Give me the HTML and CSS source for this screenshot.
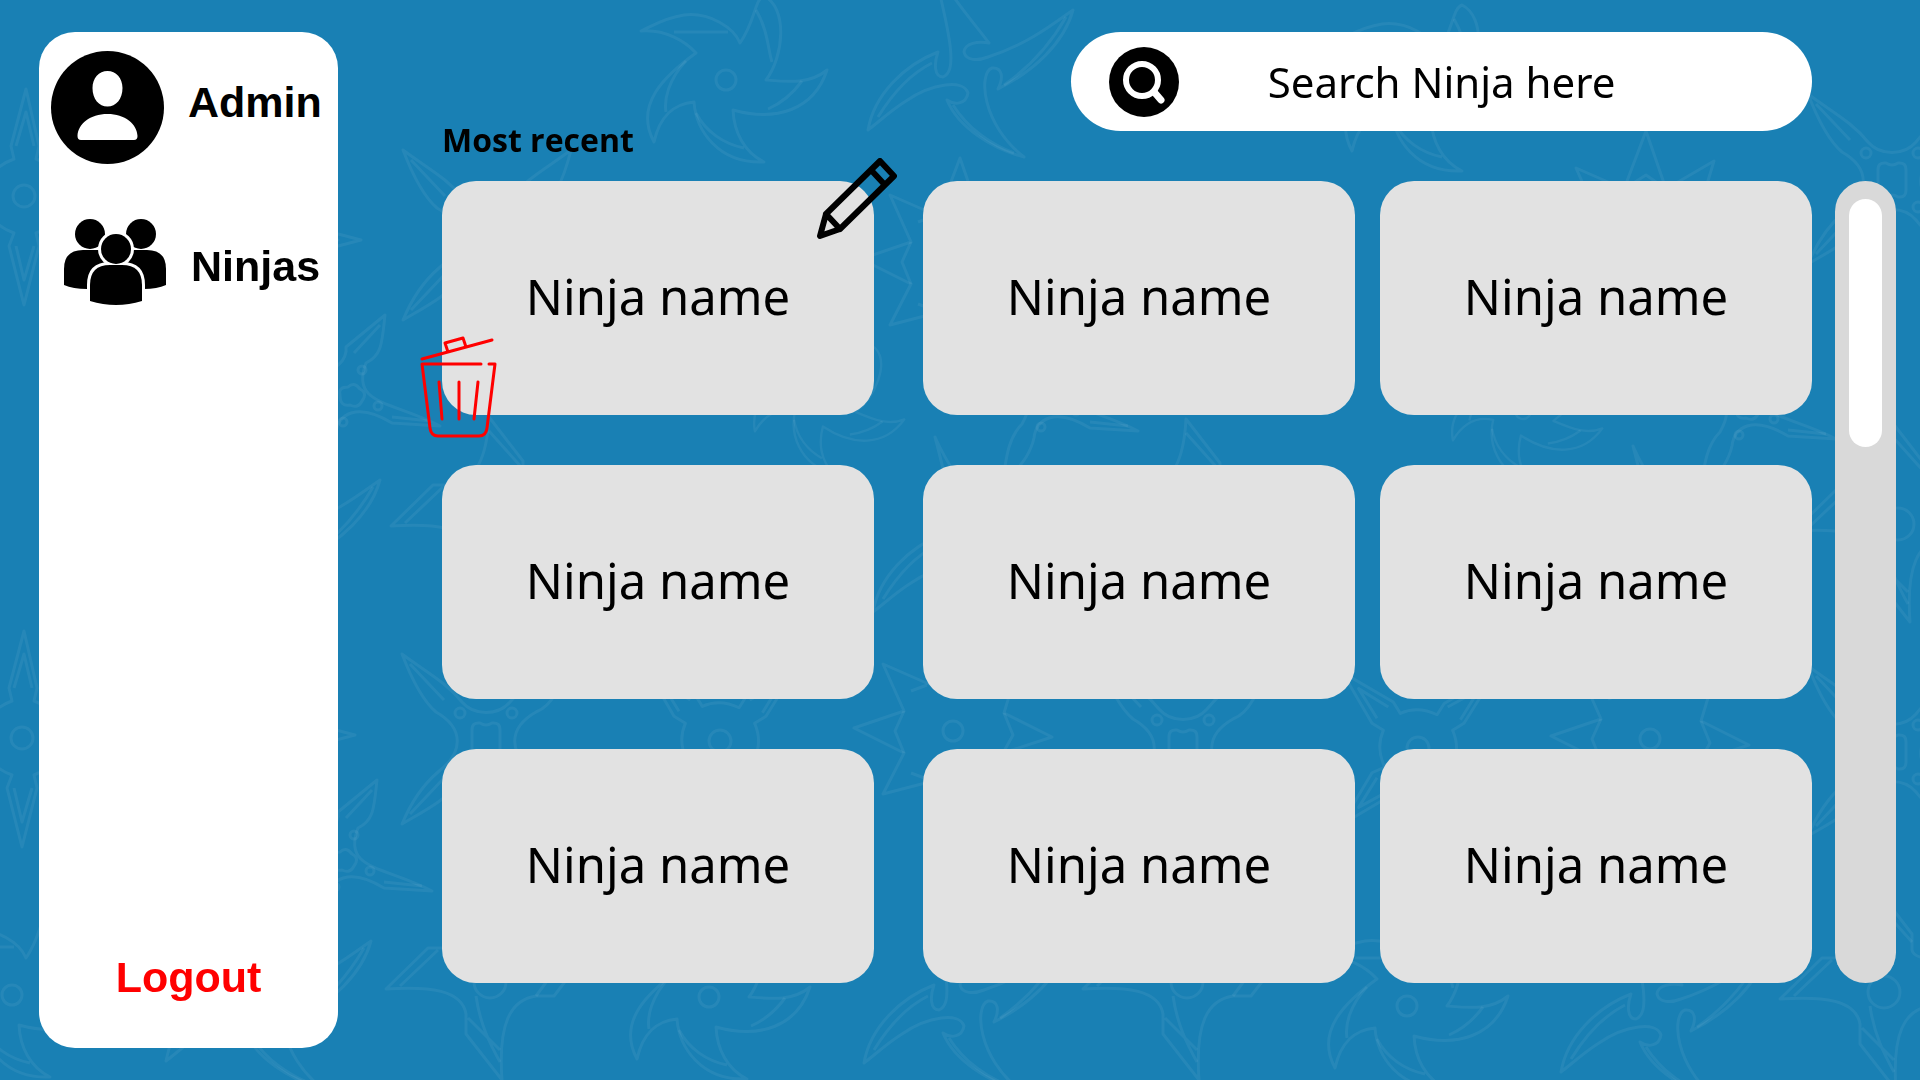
FILE: index.html
```html
<!DOCTYPE html>
<html lang="en">
<head>
<meta charset="utf-8">
<title>Ninjas</title>
<link rel="stylesheet" href="styles.css">
</head>
<body>
<svg class="backdrop" viewBox="0 0 1920 1080" preserveAspectRatio="xMidYMid slice" aria-hidden="true">
  <defs>
    <g id="pinwheel">
      <circle r="10"/>
      <path d="M14-37C8-52-16-68-42-65C-62-62-74-54-85-49C-60-51-40-38-30-27C-62-4-92 25-72 62C-66 35-52 24-32 22C-30 50-8 84 38 82C18 72 8 52 7 30C50 42 88 30 101-10C84 4 64 2 40 0C58-24 62-72 38-84C28-80 30-60 14-37Z"/>
      <path d="M-52-48H2M-40-19C-58 0-62 20-60 32M-30 33C-20 52-2 64 18 68M76 1C68 12 58 22 42 29M30-70C42-50 42-30 46-18"/>
    </g>
    <g id="swirl">
      <path d="M-100 55C-94 20-64-10-30-23C-34-12-34 2-25 2C-12-4-14-28-38-120C-20-80 0-60 21-32C10-34-3-32-4-23C-2-14 10-14 20-18C58-30 84-50 105-65C96-32 66-4 30 14C36 2 34-8 24-7C10-2 14 50 56 82C24 74-10 52-21 25C-14 30-2 30 0 18C-4 4-36 8-62 26C-78 36-88 46-100 55Z"/>
      <path d="M-90 42C-74 16-56-2-36-12M36 10C62-8 82-30 98-58M-15 30C0 54 24 70 46 78"/>
    </g>
    <g id="cross">
      <path d="M-84-86C-60-68-40-58-24-38C-12-24 12-24 24-38C40-58 60-68 84-86C76-54 66-34 50-28C22-12 22 12 48 32C60 44 74 60 84 84C60 70 40 60 24 40C12 26-12 26-24 40C-40 60-60 70-84 84C-74 60-62 44-48 32C-22 12-22-12-50-28C-64-40-74-60-84-86Z"/>
      <path d="M-14 10V-10Q-14-18-6-17Q0-13 6-17Q14-18 14-10V10Q14 18 6 17Q0 13-6 17Q-14 18-14 10ZM-76-76L-42-40M-76 74L-42 38"/>
      <circle cx="-26" cy="-27" r="5"/><circle cx="26" cy="-27" r="5"/><circle cx="-26" cy="27" r="5"/><circle cx="26" cy="27" r="5"/>
    </g>
    <g id="dart">
      <circle cy="-2" r="16"/>
      <path d="M-104 5L-62-36H-42C-20-40-8-64-6-104L28-60V-44C30-34 50-32 104-40L64 12H46C20 16 8 40 12 96L-24 50V30C-28 6-60 2-104 5Z"/>
      <path d="M-90 2L-52-34M-14 12C-10 40 0 60 10 78M-22 34L10 66M-6-90L28-52M46 12L74-26"/>
    </g>
    <g id="thorn">
      <circle r="10"/>
      <path d="M-99-3L-49-20L-70-67L-22-46L0-104L20-46L68-74L51-18L99 6L50 22L68 72L20 50L0 100L-20 50L-70 63L-49 22Z"/>
      <path d="M-49-20L-58 0L-49 22M-22-46L0-60L20-46M51-18L60 4L50 22M-42-40L-26-46M-42 42L-26 48"/>
    </g>
    <g id="kunai">
      <circle r="11"/>
      <path d="M-10-37L-13-50L2-107L15-50L12-37Q30-30 37-12L50-15L107 0L50 15L37 12Q30 30 12 37L15 50L0 109L-15 50L-10 37Q-30 30-37 12L-50 15L-107 0L-50-15L-37-12Q-30-30-10-37Z"/>
      <path d="M-8-50L2-84L10-50M-8 50L0 84L10 50M50-8L84 0L50 8M-50-8L-84 0L-50 8"/>
    </g>
    <g id="shuriken">
      <path d="M33-82C30-54 30-42 14-34C-2 8 40 4 88 29L40 26C4 4-14 18-16 36C-22 62-40 70-48 88C-44 50-40 34-28 22C-10-10-30-16-80-36L-34-30C-18-22-4-38-6-50Z"/>
      <path d="M-12-2Q-14-10-4-10Q2-16 8-8Q16-4 10 4Q6 12-2 8Q-12 10-12-2ZM28-72L2-44M78 24L40 20"/>
      <circle cx="10" cy="-27" r="4"/><circle cx="26" cy="9" r="4"/><circle cx="-9" cy="25" r="4"/><circle cx="-26" cy="-12" r="4"/>
    </g>
  </defs>
  <g class="backdrop-lines">
    <use href="#pinwheel" x="726" y="80"/>
    <use href="#pinwheel" x="1424" y="89"/>
    <use href="#pinwheel" x="12" y="995"/>
    <use href="#pinwheel" x="709" y="997"/>
    <use href="#pinwheel" x="1407" y="1006"/>
    <use href="#pinwheel" transform="translate(825 402) rotate(18) scale(.8)"/>
    <use href="#pinwheel" transform="translate(1523 411) rotate(18) scale(.8)"/>
    <use href="#swirl" x="968" y="75"/>
    <use href="#swirl" x="266" y="1006"/>
    <use href="#swirl" x="964" y="1008"/>
    <use href="#swirl" x="1661" y="1017"/>
    <use href="#swirl" x="275" y="545"/>
    <use href="#swirl" x="973" y="557"/>
    <use href="#swirl" x="1671" y="566"/>
    <use href="#cross" x="487" y="236"/>
    <use href="#cross" x="486" y="740"/>
    <use href="#cross" x="1183" y="747"/>
    <use href="#cross" x="1892" y="180"/>
    <use href="#cross" x="1892" y="752"/>
    <use href="#dart" x="490" y="984"/>
    <use href="#dart" x="1187" y="984"/>
    <use href="#dart" x="1884" y="994"/>
    <use href="#dart" x="495" y="521"/>
    <use href="#dart" x="1192" y="523"/>
    <use href="#dart" x="1898" y="526"/>
    <use href="#thorn" x="960" y="262"/>
    <use href="#thorn" x="1646" y="235"/>
    <use href="#thorn" x="953" y="731"/>
    <use href="#thorn" x="1650" y="739"/>
    <use href="#kunai" x="24" y="196"/>
    <use href="#kunai" x="22" y="738"/>
    <use href="#kunai" x="254" y="240"/>
    <use href="#kunai" x="248" y="735"/>
    <use href="#kunai" transform="translate(720 741) rotate(45)"/>
    <use href="#kunai" transform="translate(1418 748) rotate(45)"/>
    <use href="#shuriken" x="352" y="397"/>
    <use href="#shuriken" x="344" y="862"/>
    <use href="#shuriken" x="1050" y="402"/>
    <use href="#shuriken" x="1748" y="410"/>
  </g>
</svg>

<div class="app">
  <aside class="sidebar">
    <nav class="nav">
      <a class="nav-link" href="#admin">
        <svg class="icon-avatar" viewBox="0 0 113 113" aria-hidden="true">
          <circle cx="56.500" cy="56.500" r="56.500"/>
          <path fill="#fff" d="M56.500 20C65 20 71.500 27 71.500 37C71.500 48 65 55.500 56.500 55.500S41.500 48 41.500 37C41.500 27 48 20 56.500 20ZM56.500 63C74 63 86 73 86.500 85Q86.500 89 83 89H30Q26.500 89 26.500 85C27 73 39 63 56.500 63Z"/>
        </svg>
        <span>Admin</span>
      </a>
      <a class="nav-link nav-link-group" href="#ninjas">
        <svg class="icon-group" viewBox="0 0 103 86" aria-hidden="true">
          <circle cx="26" cy="15" r="15"/>
          <circle cx="77" cy="15" r="15"/>
          <path d="M0 66V50Q0 31 19 31H83Q102 31 102 50V66Q93 70 80 70H23Q9 70 0 66Z"/>
          <path class="cut" d="M26 82V66Q26 46 46 46H58Q78 46 78 66V82Q65 86 52 86T26 82Z"/>
          <circle class="cut" cx="52" cy="30" r="15"/>
          <path d="M26 82V66Q26 46 46 46H58Q78 46 78 66V82Q65 86 52 86T26 82Z"/>
          <circle cx="52" cy="30" r="15"/>
        </svg>
        <span>Ninjas</span>
      </a>
    </nav>
    <button class="logout" type="button">Logout</button>
  </aside>

  <main class="main">
    <form class="search" role="search">
      <button class="search-button" type="button" aria-label="Search">
        <svg viewBox="0 0 70 70" aria-hidden="true">
          <circle cx="35" cy="35" r="35"/>
          <g fill="none" stroke="#fff"><circle cx="33" cy="33" r="16" stroke-width="6"/><path stroke-width="7" stroke-linecap="round" d="M46 46L52 53"/></g>
        </svg>
      </button>
      <input class="search-input" type="text" placeholder="Search Ninja here" aria-label="Search Ninja here">
    </form>
    <h1 class="heading">Most recent</h1>
    <div class="board">
      <ul class="cards">
        <li class="card">Ninja name
          <button class="edit" type="button" aria-label="Edit">
            <svg viewBox="0 0 80 82" aria-hidden="true"><path d="M3 78L9 56L63 3L77 18L23 71ZM9 56L23 71M54 12L68 27"/></svg>
          </button>
          <button class="delete" type="button" aria-label="Delete">
            <svg viewBox="0 0 78 102" aria-hidden="true"><path d="M2 22L72 3M28 15L25 6L43 1L46 10M61 27H2L10 91Q11 99 18 99H59Q66 99 67 91L75 27H69M19 45L22 82M39 45V82M58 45L54 82"/></svg>
          </button>
        </li>
        <li class="card">Ninja name</li>
        <li class="card">Ninja name</li>
        <li class="card">Ninja name</li>
        <li class="card">Ninja name</li>
        <li class="card">Ninja name</li>
        <li class="card">Ninja name</li>
        <li class="card">Ninja name</li>
        <li class="card">Ninja name</li>
      </ul>
      <div class="track"><div class="thumb"></div></div>
    </div>
  </main>
</div>
</body>
</html>
```
FILE: styles.css
```css
* {
  box-sizing: border-box;
}

body {
  margin: 0;
  background: #1980b4;
  color: #000;
  font-family: "Noto Sans", sans-serif;
}

button {
  padding: 0;
  border: 0;
  background: none;
  color: inherit;
  font: inherit;
  cursor: pointer;
}

svg {
  display: block;
}

.backdrop {
  position: fixed;
  inset: 0;
  z-index: -1;
  width: 100%;
  height: 100%;
}

.backdrop-lines {
  fill: none;
  stroke: #fff;
  stroke-opacity: 0.06;
  stroke-width: 3;
  stroke-linejoin: round;
}

.app {
  display: flex;
  gap: 104px;
  min-height: 100vh;
  padding: 32px 24px 32px 39px;
}

.sidebar {
  display: flex;
  flex-direction: column;
  justify-content: space-between;
  flex: 0 0 299px;
  padding: 19px 12px 46px;
  border-radius: 36px;
  background: #fff;
  font: bold 43px/50px "Liberation Sans", Arial, sans-serif;
}

.nav {
  display: flex;
  flex-direction: column;
  gap: 55px;
}

.nav-link {
  display: flex;
  align-items: center;
  gap: 24px;
  color: inherit;
  text-decoration: none;
}

.nav-link span {
  padding-bottom: 12px;
}

.nav-link-group {
  padding-left: 13px;
}

.nav-link-group span {
  padding: 8px 0 0;
}

.icon-avatar {
  width: 113px;
  height: 113px;
}

.icon-group {
  width: 103px;
  height: 86px;
}

.icon-group .cut {
  fill: #fff;
  stroke: #fff;
  stroke-width: 6;
}

.logout {
  color: #f00;
}

.main {
  display: flex;
  flex-direction: column;
  flex: 1;
  min-width: 0;
}

.search {
  display: flex;
  align-items: center;
  align-self: flex-end;
  width: 741px;
  max-width: 100%;
  height: 99px;
  margin-right: 84px;
  padding: 0 108px 0 38px;
  border-radius: 50px;
  background: #fff;
}

.search-button {
  flex: 0 0 70px;
}

.search-input {
  flex: 1;
  min-width: 0;
  padding: 0;
  border: 0;
  outline: 0;
  background: none;
  font: 42px/60px "Noto Sans", sans-serif;
  text-align: center;
}

.search-input::placeholder {
  color: #000;
  opacity: 1;
}

.heading {
  margin: 0;
  padding-bottom: 32px;
  font: bold 32px/18px "Open Sans", sans-serif;
}

.board {
  display: flex;
  gap: 23px;
}

.cards {
  display: grid;
  flex: 1;
  grid-template-columns: calc((100% - 74px) / 3 + 24px) 1fr 1fr;
  grid-auto-rows: 234px;
  gap: 50px 25px;
  margin: 0;
  padding: 0;
  list-style: none;
}

.card {
  position: relative;
  display: flex;
  align-items: center;
  justify-content: center;
  padding-bottom: 4px;
  border-radius: 34px;
  background: #e2e2e2;
  font-size: 49px;
  line-height: 68px;
}

.card:nth-child(3n + 1) {
  margin-right: 24px;
}

.edit,
.delete {
  position: absolute;
}

.edit svg,
.delete svg {
  width: 100%;
  fill: none;
  stroke-linecap: round;
  stroke-linejoin: round;
  overflow: visible;
}

.edit {
  top: -23px;
  right: -23px;
  width: 80px;
}

.edit svg {
  stroke: #000;
  stroke-width: 6;
}

.delete {
  bottom: -24px;
  left: -22px;
  width: 78px;
}

.delete svg {
  stroke: #f00;
  stroke-width: 3;
}

.track {
  flex: 0 0 61px;
  padding: 18px 14px;
  border-radius: 31px;
  background: #d9d9d9;
}

.thumb {
  height: 248px;
  border-radius: 17px;
  background: #fff;
}
```
